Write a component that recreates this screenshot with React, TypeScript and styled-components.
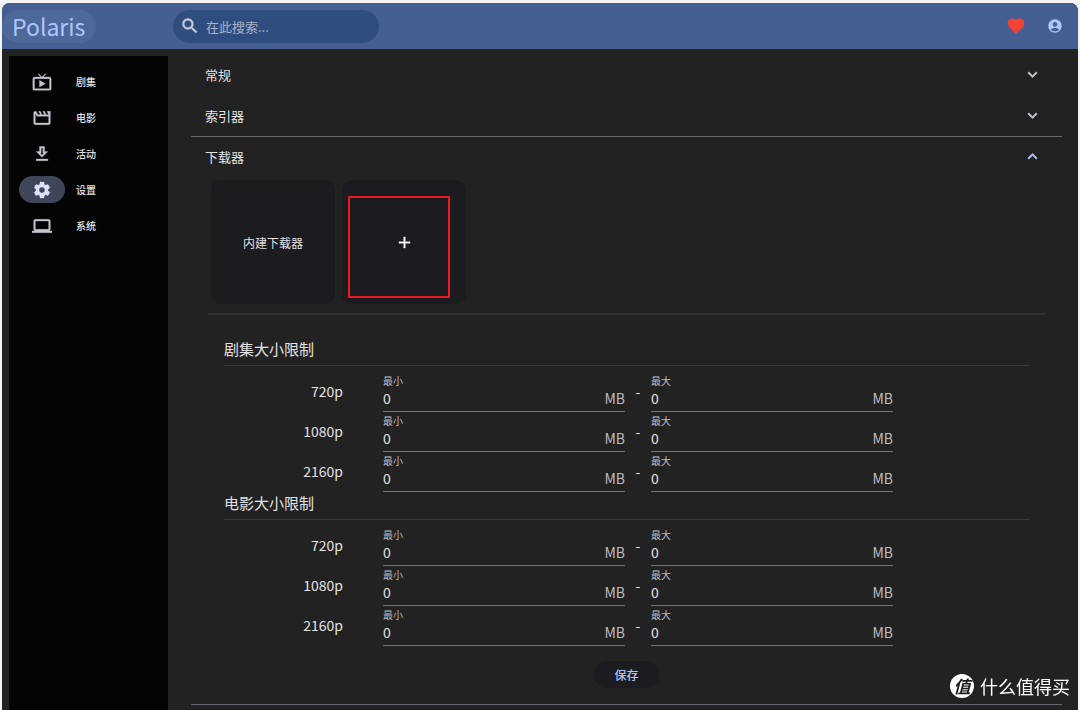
import React, { useState } from "react";
import styled, { createGlobalStyle } from "styled-components";
import {
  MdAccountCircle,
  MdAdd,
  MdComputer,
  MdExpandLess,
  MdExpandMore,
  MdFavorite,
  MdLiveTv,
  MdOutlineDownload,
  MdOutlineMovieCreation,
  MdSearch,
  MdSettings,
} from "react-icons/md";

const color = {
  page: "#f4f4f5",
  surface: "#222222",
  card: "#1b1b20",
  bar: "#455f93",
  barField: "#304d80",
  barPill: "#4e689a",
  primary: "#aec6ff",
  text: "#e2e2e6",
  muted: "#bcbdc6",
  line: "#68686e",
  faintLine: "#3a3a3e",
};

const GlobalStyle = createGlobalStyle`
  *, *::before, *::after { box-sizing: border-box; }
  body {
    margin: 0;
    background: ${color.page};
    color: ${color.text};
    font-family: "Noto Sans CJK SC", "Noto Sans", sans-serif;
    font-size: 14px;
  }
  button, input { font: inherit; color: inherit; }
  button { border: 0; padding: 0; background: none; cursor: pointer; }
  svg { display: block; flex: none; }
`;

const Page = styled.div`
  min-height: 100vh;
  padding: 3px 2px 0;
  display: flex;
`;

const Window = styled.div`
  flex: 1;
  min-width: 0;
  display: flex;
  flex-direction: column;
  overflow: hidden;
  border-radius: 8px 8px 0 0;
  background: ${color.surface};
`;

const TopBar = styled.header`
  height: 46px;
  display: flex;
  align-items: center;
  padding-right: 13px;
  background: ${color.bar};
`;

const BrandArea = styled.div`
  flex: none;
  width: 171px;
`;

const Brand = styled.button`
  height: 33px;
  padding: 0 11px 0 10px;
  border-radius: 17px;
  background: ${color.barPill};
  color: ${color.primary};
  font-size: 23px;
  line-height: 33px;
`;

const SearchBox = styled.label`
  width: 206px;
  height: 33px;
  display: flex;
  align-items: center;
  gap: 6px;
  padding: 0 16px 0 7px;
  border-radius: 17px;
  background: ${color.barField};
  color: #c8cddb;

  path:not([fill="none"]) { stroke: currentColor; stroke-width: 0.6; }
`;

const SearchInput = styled.input`
  flex: 1;
  min-width: 0;
  border: 0;
  padding: 0;
  outline: 0;
  background: none;
  font-size: 13px;
  &::placeholder { color: #a9b2c6; opacity: 1; }
`;

const BarActions = styled.div`
  margin-left: auto;
  display: flex;
  align-items: center;
  gap: 19px;
`;

const IconButton = styled.button<{ $tint: string }>`
  width: 20px;
  height: 20px;
  display: grid;
  place-items: center;
  color: ${(p) => p.$tint};
`;

const Body = styled.div`
  flex: 1;
  display: flex;
  padding: 6px 16px 0 7px;
`;

const Rail = styled.nav`
  flex: none;
  width: 159px;
  margin-top: 1px;
  padding: 12px 10px;
  display: flex;
  flex-direction: column;
  gap: 9px;
  background: #040404;
`;

const RailItem = styled.a`
  display: flex;
  align-items: center;
  gap: 11px;
  color: ${color.text};
  font-size: 10px;
  font-weight: 500;
  line-height: 27px;
  text-decoration: none;
`;

const RailIcon = styled.span<{ $active: boolean }>`
  width: 46px;
  height: 27px;
  display: grid;
  place-items: center;
  border-radius: 14px;
  background: ${(p) => (p.$active ? "#404659" : "transparent")};
  color: ${(p) => (p.$active ? "#dae2ff" : "#c4c6d0")};

  path:not([fill="none"]) { stroke: currentColor; stroke-width: 0.4; }
`;

const Main = styled.main`
  flex: 1;
  min-width: 0;
  margin-left: 23px;
`;

const PanelHeader = styled.button<{ $ruled?: boolean }>`
  width: 100%;
  height: 41px;
  display: flex;
  align-items: center;
  justify-content: space-between;
  padding: 0 20px 2px 14px;
  border-bottom: 1px solid ${(p) => (p.$ruled ? color.line : "transparent")};
  font-size: 13px;
  text-align: left;
`;

const Chevron = styled.span<{ $open: boolean }>`
  color: ${(p) => (p.$open ? color.primary : "#c4c6d0")};

  path:not([fill="none"]) { stroke: currentColor; stroke-width: 0.6; }
`;

const PanelBody = styled.div`
  padding: 2px 17px 16px;
  border-bottom: 1px solid ${color.line};
`;

const CardRow = styled.div`
  display: flex;
  flex-wrap: wrap;
  gap: 7px;
  padding: 0 3px 9px;
  border-bottom: 2px solid #2f2f34;
`;

const Card = styled.button`
  position: relative;
  width: 124px;
  height: 124px;
  display: grid;
  place-items: center;
  border-radius: 10px;
  background: ${color.card};
  font-size: 12px;
`;

const AddIcon = styled(MdAdd)`
  color: #f4f4f6;

  path:not([fill="none"]) { stroke: currentColor; stroke-width: 0.5; }
`;

const Highlight = styled.span`
  position: absolute;
  top: 16px;
  left: 6px;
  width: 102px;
  height: 102px;
  border: 2px solid #ea1c21;
  border-radius: 1px;
`;

const LimitForm = styled.form`
  padding: 23px 16px 0;
`;

const LimitTitle = styled.h2`
  margin: 0 0 6px;
  padding-bottom: 5px;
  border-bottom: 1px solid ${color.faintLine};
  font-size: 15px;
  font-weight: 400;
  line-height: 22px;
`;

const LimitRow = styled.div`
  height: 40px;
  display: grid;
  grid-template-columns:
    minmax(0, 119fr) 40px minmax(0, 242fr) 26px minmax(0, 242fr) minmax(0, 136fr);
`;

const Quality = styled.span`
  line-height: 38px;
  text-align: right;
`;

const Dash = styled.span`
  line-height: 38px;
  text-align: center;
`;

const Field = styled.label<{ $column: number }>`
  grid-column: ${(p) => p.$column};
  display: grid;
  grid-template: 17px 18px / 1fr auto;
  align-items: center;
  border-bottom: 1px solid #74747b;
  color: ${color.muted};
`;

const FieldName = styled.span`
  grid-column: 1 / -1;
  font-size: 10px;
  line-height: 17px;
`;

const FieldInput = styled.input`
  width: 100%;
  height: 18px;
  border: 0;
  padding: 0;
  outline: 0;
  background: none;
  color: ${color.text};
  line-height: 18px;
`;

const Unit = styled.span`
  line-height: 18px;
`;

const SaveButton = styled.button`
  display: block;
  height: 27px;
  margin: 15px auto 0;
  padding: 0 20px;
  border-radius: 14px;
  background: ${color.card};
  color: ${color.primary};
  font-size: 12px;
  font-weight: 500;
`;

const Watermark = styled.div`
  position: fixed;
  right: 10px;
  bottom: 10px;
  display: flex;
  align-items: center;
  gap: 6px;
  color: #ffffff;
  font-size: 18px;
  line-height: 28px;
`;

const WatermarkBadge = styled.span`
  width: 24px;
  height: 24px;
  border-radius: 50%;
  background: #ffffff;
  color: #1c1c1c;
  font-size: 17px;
  font-style: italic;
  font-weight: 700;
  line-height: 23px;
  text-align: center;
`;

const navItems = [
  { name: "剧集", Icon: MdLiveTv },
  { name: "电影", Icon: MdOutlineMovieCreation },
  { name: "活动", Icon: MdOutlineDownload },
  { name: "设置", Icon: MdSettings },
  { name: "系统", Icon: MdComputer },
];

const qualities = ["720p", "1080p", "2160p"];

function SizeField({ name, column }: { name: string; column: number }) {
  const [value, setValue] = useState("0");
  return (
    <Field $column={column}>
      <FieldName>{name}</FieldName>
      <FieldInput
        inputMode="numeric"
        value={value}
        onChange={(e) => setValue(e.target.value)}
      />
      <Unit>MB</Unit>
    </Field>
  );
}

function LimitSection({ title }: { title: string }) {
  return (
    <section>
      <LimitTitle>{title}</LimitTitle>
      {qualities.map((quality) => (
        <LimitRow key={quality} role="group" aria-label={quality}>
          <Quality>{quality}</Quality>
          <SizeField name="最小" column={3} />
          <Dash>-</Dash>
          <SizeField name="最大" column={5} />
        </LimitRow>
      ))}
    </section>
  );
}

function PanelToggle({
  title,
  open = false,
  ruled = false,
}: {
  title: string;
  open?: boolean;
  ruled?: boolean;
}) {
  return (
    <PanelHeader type="button" $ruled={ruled} aria-expanded={open}>
      {title}
      <Chevron $open={open}>
        {open ? <MdExpandLess size={19} /> : <MdExpandMore size={19} />}
      </Chevron>
    </PanelHeader>
  );
}

export default function App() {
  return (
    <Page>
      <GlobalStyle />
      <Window>
        <TopBar>
          <BrandArea>
            <Brand type="button">Polaris</Brand>
          </BrandArea>
          <SearchBox>
            <MdSearch size={20} />
            <SearchInput type="text" placeholder="在此搜索..." aria-label="搜索" />
          </SearchBox>
          <BarActions>
            <IconButton type="button" $tint="#f44336" aria-label="收藏">
              <MdFavorite size={20} />
            </IconButton>
            <IconButton type="button" $tint={color.primary} aria-label="账户">
              <MdAccountCircle size={16} />
            </IconButton>
          </BarActions>
        </TopBar>
        <Body>
          <Rail>
            {navItems.map(({ name, Icon }) => {
              const active = name === "设置";
              return (
                <RailItem key={name} href="#" aria-current={active ? "page" : undefined}>
                  <RailIcon $active={active}>
                    <Icon size={20} />
                  </RailIcon>
                  {name}
                </RailItem>
              );
            })}
          </Rail>
          <Main>
            <PanelToggle title="常规" />
            <PanelToggle title="索引器" ruled />
            <PanelToggle title="下载器" open />
            <PanelBody>
              <CardRow>
                <Card type="button">内建下载器</Card>
                <Card type="button" aria-label="添加下载器">
                  <AddIcon size={19} />
                  <Highlight />
                </Card>
              </CardRow>
              <LimitForm onSubmit={(e) => e.preventDefault()}>
                <LimitSection title="剧集大小限制" />
                <LimitSection title="电影大小限制" />
                <SaveButton type="submit">保存</SaveButton>
              </LimitForm>
            </PanelBody>
          </Main>
        </Body>
      </Window>
      <Watermark>
        <WatermarkBadge>值</WatermarkBadge>
        什么值得买
      </Watermark>
    </Page>
  );
}
